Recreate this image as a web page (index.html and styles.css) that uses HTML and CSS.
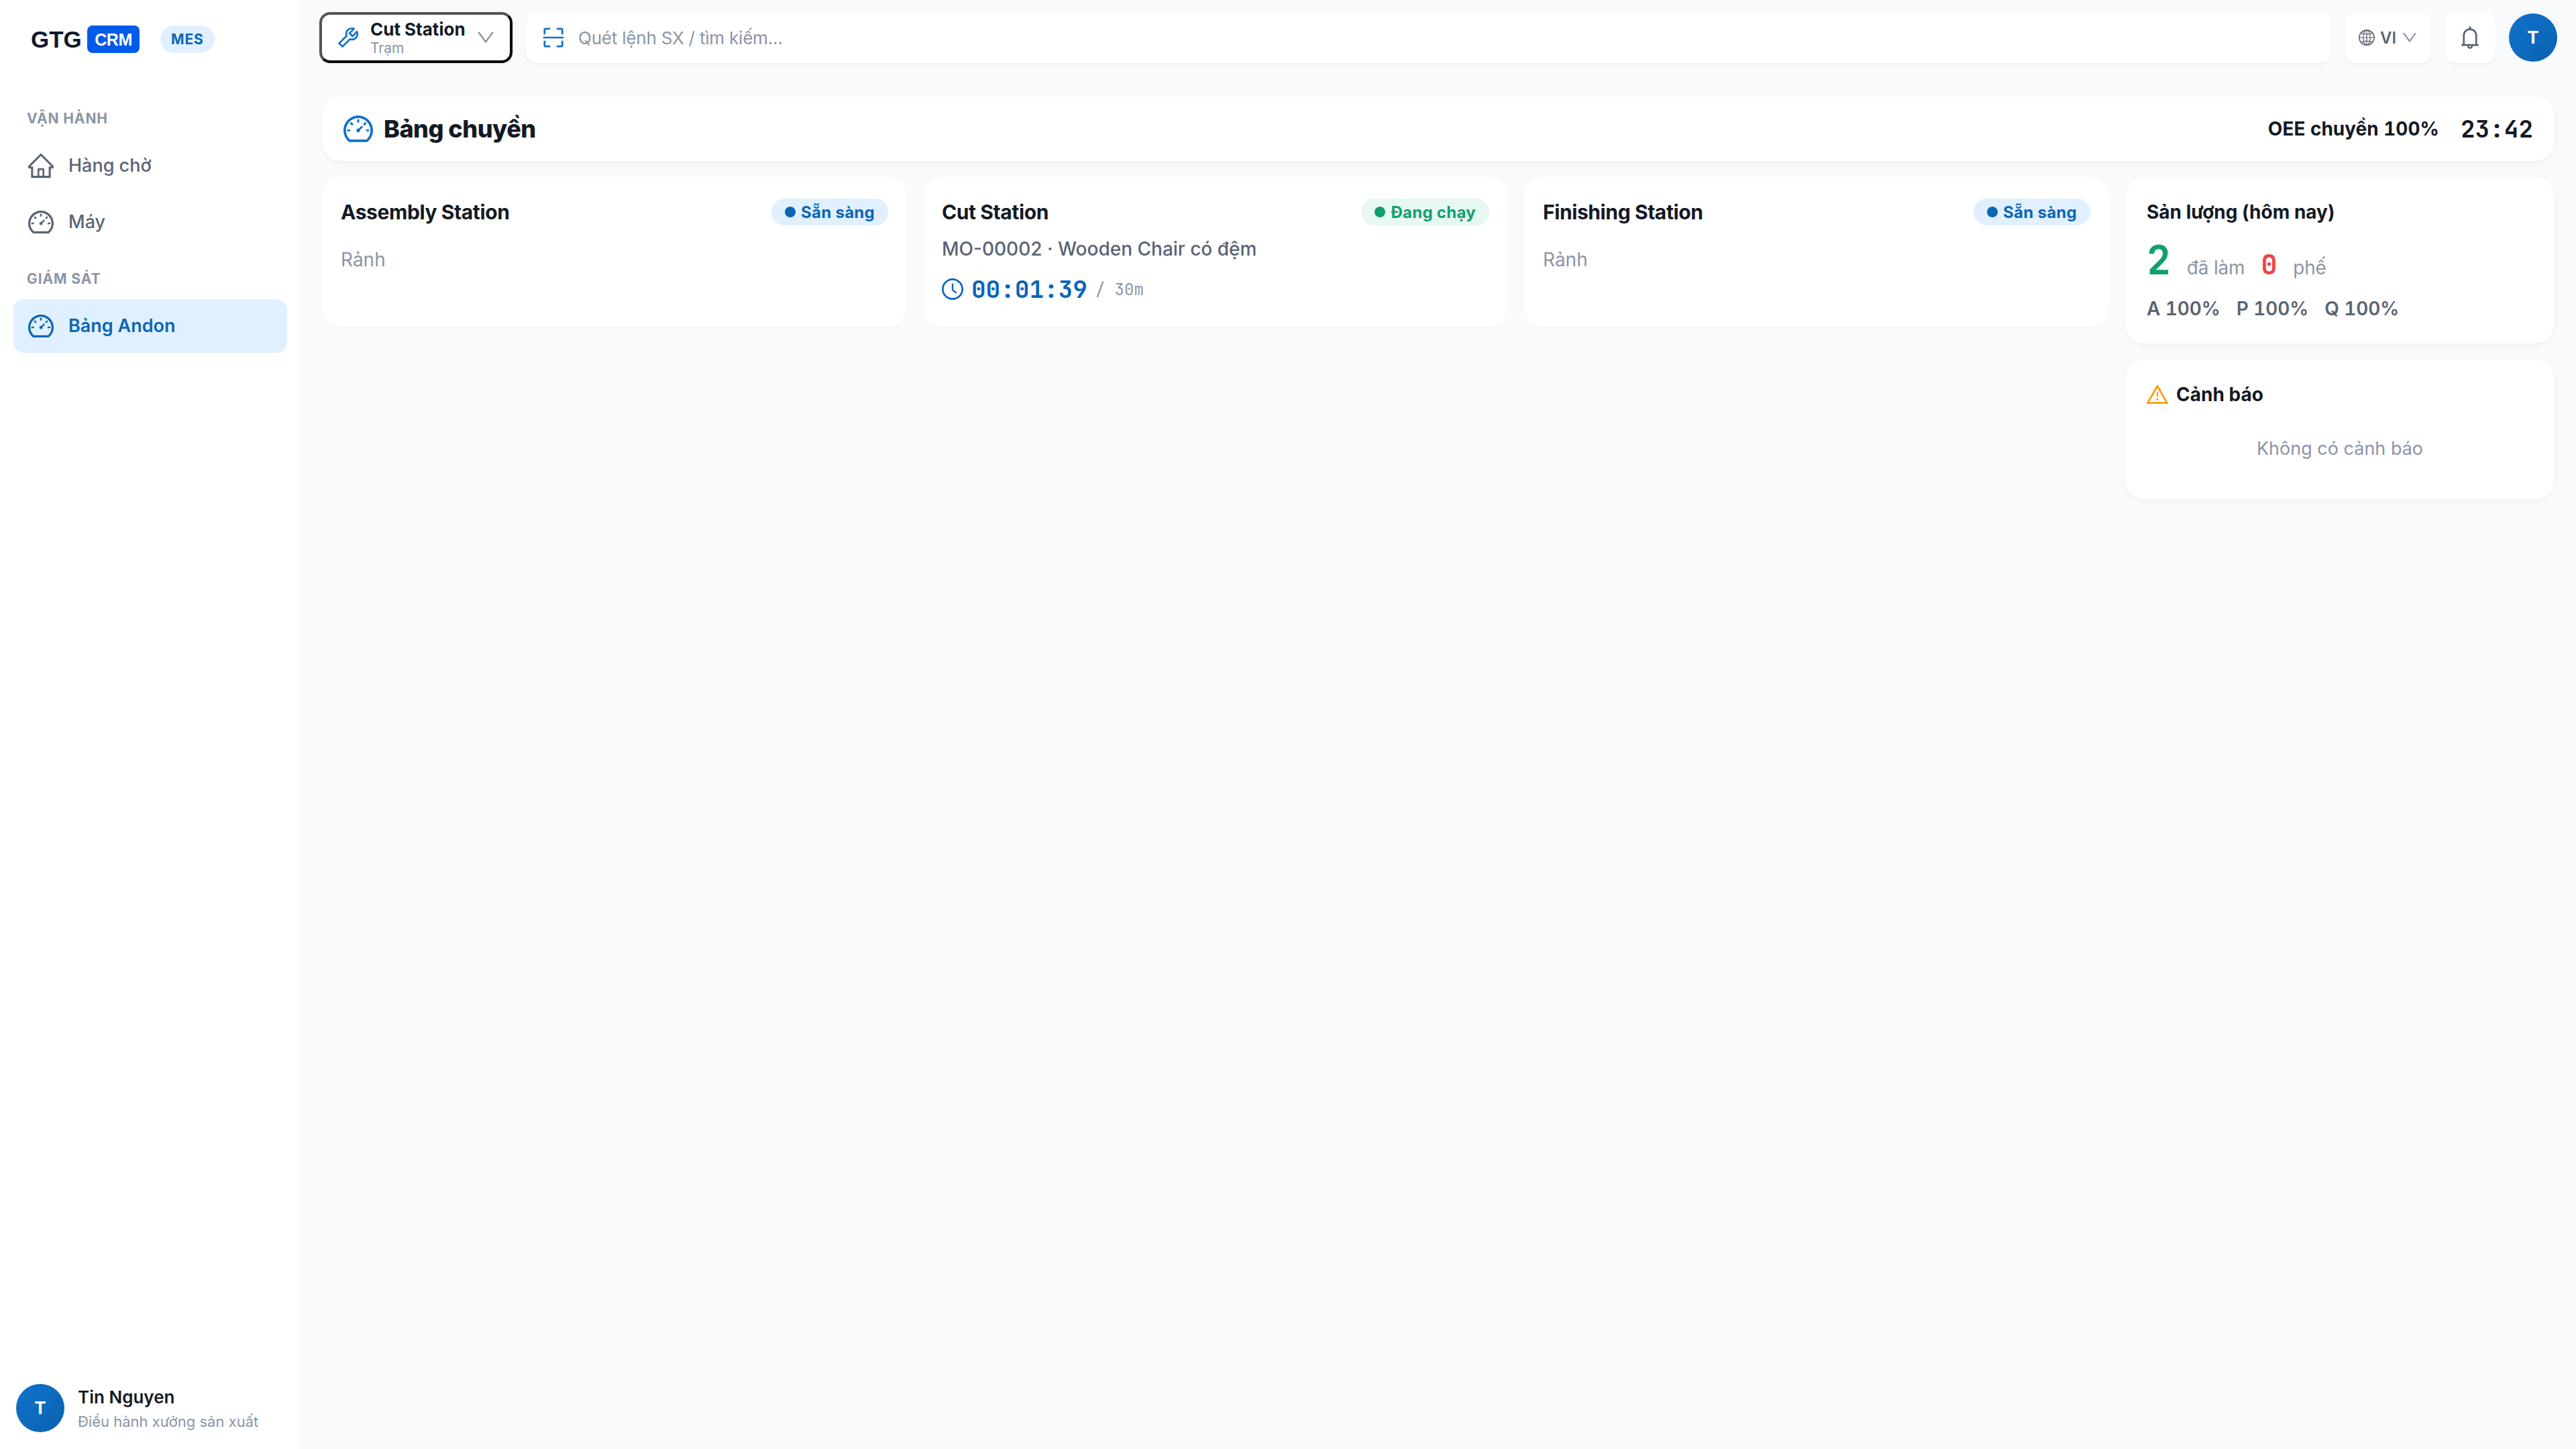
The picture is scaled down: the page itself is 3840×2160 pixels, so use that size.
FILE: index.html
```html
<!DOCTYPE html>
<html lang="vi">
<head>
  <meta charset="UTF-8">
  <meta name="viewport" content="width=device-width, initial-scale=1.0">
  <title>GTG CRM - MES</title>
  <link rel="stylesheet" href="styles.css">
</head>
<body>
  <svg class="sprite" aria-hidden="true">
    <symbol id="i-home" viewBox="64 64 896 896"><path d="M946.5 505L560.1 118.8l-25.9-25.9a31.5 31.5 0 00-44.4 0L77.5 505a63.9 63.9 0 00-18.8 46c.4 35.2 29.7 63.3 64.9 63.3h42.5V940h691.8V614.3h43.4c17.1 0 33.2-6.7 45.3-18.8a63.6 63.6 0 0018.7-45.3c0-17-6.7-33.1-18.8-45.2zM568 868H456V664h112v204zm217.9-325.7V868H632V640c0-22.1-17.9-40-40-40H432c-22.1 0-40 17.9-40 40v228H238.1V542.3h-96l370-369.7 23.1 23.1L882 542.3h-96.1z"/></symbol>
    <symbol id="i-dashboard" viewBox="64 64 896 896"><path d="M924.8 385.6a446.7 446.7 0 00-96-142.4 446.7 446.7 0 00-142.4-96C631.1 123.8 572.5 112 512 112s-119.1 11.8-174.4 35.2a446.7 446.7 0 00-142.4 96 446.7 446.7 0 00-96 142.4C75.8 440.9 64 499.5 64 560c0 132.7 58.3 257.7 159.9 343.1l1.7 1.4c5.8 4.8 13.1 7.5 20.6 7.5h531.7c7.5 0 14.8-2.7 20.6-7.5l1.7-1.4C901.7 817.7 960 692.7 960 560c0-60.5-11.9-119.1-35.2-174.4zM761.4 836H262.6A371.12 371.12 0 01140 560c0-99.4 38.7-192.8 109-263 70.3-70.3 163.7-109 263-109 99.4 0 192.8 38.7 263 109 70.3 70.3 109 163.7 109 263 0 105.6-44.5 205.5-122.6 276zM623.5 421.5a8.03 8.03 0 00-11.3 0L527.7 506c-18.7-5-39.4-.2-54.1 14.5a55.95 55.95 0 000 79.2 55.95 55.95 0 0079.2 0 55.87 55.87 0 0014.5-54.1l84.5-84.5c3.1-3.1 3.1-8.2 0-11.3l-28.3-28.3zM490 320h44c4.4 0 8-3.6 8-8v-80c0-4.4-3.6-8-8-8h-44c-4.4 0-8 3.6-8 8v80c0 4.4 3.6 8 8 8zm260 218v44c0 4.4 3.6 8 8 8h80c4.4 0 8-3.6 8-8v-44c0-4.4-3.6-8-8-8h-80c-4.4 0-8 3.6-8 8zm12.7-197.2l-31.1-31.1a8.03 8.03 0 00-11.3 0l-56.6 56.6a8.03 8.03 0 000 11.3l31.1 31.1c3.1 3.1 8.2 3.1 11.3 0l56.6-56.6c3.1-3.1 3.1-8.2 0-11.3zm-458.6-31.1a8.03 8.03 0 00-11.3 0l-31.1 31.1a8.03 8.03 0 000 11.3l56.6 56.6c3.1 3.1 8.2 3.1 11.3 0l31.1-31.1c3.1-3.1 3.1-8.2 0-11.3l-56.6-56.6zM262 530h-80c-4.4 0-8 3.6-8 8v44c0 4.4 3.6 8 8 8h80c4.4 0 8-3.6 8-8v-44c0-4.4-3.6-8-8-8z"/></symbol>
    <symbol id="i-tool" viewBox="64 64 896 896"><path d="M876.6 239.5c-.5-.9-1.2-1.8-2-2.5-5-5-13.1-5-18.1 0L684.2 409.3l-67.9-67.9L788.7 169c.8-.8 1.4-1.6 2-2.5 3.6-6.1 1.6-13.9-4.5-17.5-98.2-58-226.8-44.7-311.3 39.7-67 67-89.2 162-66.5 247.4l-293 293c-3 3-2.8 7.9.3 11l169.7 169.7c3.1 3.1 8.1 3.3 11 .3l292.9-292.9c85.5 22.8 180.5.7 247.6-66.4 84.4-84.5 97.7-213.1 39.7-311.3zM786 499.8c-58.1 58.1-145.3 69.3-214.6 33.6l-8.8 8.8-.1-.1-274 274.1-79.2-79.2 230.1-230.1s0 .1.1.1l52.8-52.8c-35.7-69.3-24.5-156.5 33.6-214.6a184.2 184.2 0 01144-53.5L537 318.9a32.05 32.05 0 000 45.3l124.5 124.5a32.05 32.05 0 0045.3 0l132.8-132.8c3.7 51.8-14.4 104.8-53.6 143.9z"/></symbol>
    <symbol id="i-down" viewBox="64 64 896 896"><path d="M884 256h-75c-5.1 0-9.9 2.5-12.9 6.6L512 654.2 227.9 262.6c-3-4.1-7.8-6.6-12.9-6.6h-75c-6.5 0-10.3 7.4-6.5 12.7l352.6 486.1c12.8 17.6 39 17.6 51.7 0l352.6-486.1c3.9-5.3.1-12.7-6.4-12.7z"/></symbol>
    <symbol id="i-scan" viewBox="64 64 896 896"><path d="M136 384h56c4.4 0 8-3.6 8-8V200h176c4.4 0 8-3.6 8-8v-56c0-4.4-3.6-8-8-8H196c-37.6 0-68 30.4-68 68v180c0 4.4 3.6 8 8 8zm512-184h176v176c0 4.4 3.6 8 8 8h56c4.4 0 8-3.6 8-8V196c0-37.6-30.4-68-68-68H648c-4.4 0-8 3.6-8 8v56c0 4.4 3.6 8 8 8zM376 824H200V648c0-4.4-3.6-8-8-8h-56c-4.4 0-8 3.6-8 8v180c0 37.6 30.4 68 68 68h180c4.4 0 8-3.6 8-8v-56c0-4.4-3.6-8-8-8zm512-184h-56c-4.4 0-8 3.6-8 8v176H648c-4.4 0-8 3.6-8 8v56c0 4.4 3.6 8 8 8h180c37.6 0 68-30.4 68-68V648c0-4.4-3.6-8-8-8zm16-164H120c-4.4 0-8 3.6-8 8v56c0 4.4 3.6 8 8 8h784c4.4 0 8-3.6 8-8v-56c0-4.4-3.6-8-8-8z"/></symbol>
    <symbol id="i-globe" viewBox="64 64 896 896"><g fill="none" stroke="currentColor" stroke-width="46"><circle cx="512" cy="512" r="416" stroke-width="60"/><ellipse cx="512" cy="512" rx="200" ry="416"/><path d="M512 98v828M98 512h828M200 238c80 66 190 80 312 80s232-14 312-80M200 786c80-66 190-80 312-80s232 14 312 80"/></g></symbol>
    <symbol id="i-bell" viewBox="64 64 896 896"><path d="M816 768h-24V428c0-141.1-104.3-257.7-240-277.1V112c0-22.1-17.9-40-40-40s-40 17.9-40 40v38.9c-135.7 19.4-240 136-240 277.1v340h-24c-17.7 0-32 14.3-32 32v32c0 4.4 3.6 8 8 8h216c0 61.8 50.2 112 112 112s112-50.2 112-112h216c4.4 0 8-3.6 8-8v-32c0-17.7-14.3-32-32-32zM512 888c-26.5 0-48-21.5-48-48h96c0 26.5-21.5 48-48 48zM304 768V428c0-55.6 21.6-107.8 60.9-147.1S456.4 220 512 220c55.6 0 107.8 21.6 147.1 60.9S720 372.4 720 428v340H304z"/></symbol>
    <symbol id="i-clock" viewBox="64 64 896 896"><path d="M512 64C264.6 64 64 264.6 64 512s200.6 448 448 448 448-200.6 448-448S759.4 64 512 64zm0 820c-205.4 0-372-166.6-372-372s166.6-372 372-372 372 166.6 372 372-166.6 372-372 372z"/><path d="M686.7 638.6L544.1 535.5V288c0-4.4-3.6-8-8-8H488c-4.4 0-8 3.6-8 8v275.4c0 2.6 1.2 5 3.3 6.5l165.4 120.6c3.6 2.6 8.6 1.8 11.2-1.7l28.6-39c2.6-3.7 1.8-8.7-1.8-11.2z"/></symbol>
    <symbol id="i-warning" viewBox="64 64 896 896"><path d="M464 720a48 48 0 1096 0 48 48 0 10-96 0zm16-304v184c0 4.4 3.6 8 8 8h48c4.4 0 8-3.6 8-8V416c0-4.4-3.6-8-8-8h-48c-4.4 0-8 3.6-8 8zm475.7 440l-416-720c-6.2-10.7-16.9-16-27.7-16s-21.6 5.3-27.7 16l-416 720C56 877.4 71.4 904 96 904h832c24.6 0 40-26.6 27.7-48zm-783.5-27.9L512 239.9l339.8 588.2H172.2z"/></symbol>
  </svg>

  <div class="app">
    <aside class="sidebar">
      <div class="brand">
        <span class="logo-text">GTG</span>
        <span class="logo-box">CRM</span>
        <span class="brand-tag">MES</span>
      </div>

      <nav class="menu">
        <div class="menu-label">VẬN HÀNH</div>
        <a class="menu-item"><svg class="icon"><use href="#i-home"/></svg><span>Hàng chờ</span></a>
        <a class="menu-item"><svg class="icon"><use href="#i-dashboard"/></svg><span>Máy</span></a>
        <div class="menu-label">GIÁM SÁT</div>
        <a class="menu-item active"><svg class="icon"><use href="#i-dashboard"/></svg><span>Bảng Andon</span></a>
      </nav>

      <div class="user">
        <div class="avatar">T</div>
        <div class="user-info">
          <div class="user-name">Tin Nguyen</div>
          <div class="user-role">Điều hành xưởng sản xuất</div>
        </div>
      </div>
    </aside>

    <div class="page">
      <header class="topbar">
        <button class="station-select">
          <svg class="icon"><use href="#i-tool"/></svg>
          <span class="station-text">
            <span class="station-current">Cut Station</span>
            <span class="station-sub">Trạm</span>
          </span>
          <svg class="icon chevron"><use href="#i-down"/></svg>
        </button>
        <div class="search">
          <svg class="icon"><use href="#i-scan"/></svg>
          <span>Quét lệnh SX / tìm kiếm...</span>
        </div>
        <div class="lang">
          <svg class="icon"><use href="#i-globe"/></svg>
          <span>VI</span>
          <svg class="icon chevron"><use href="#i-down"/></svg>
        </div>
        <div class="bell"><svg class="icon"><use href="#i-bell"/></svg></div>
        <div class="avatar">T</div>
      </header>

      <main class="content">
        <div class="board-head">
          <svg class="icon"><use href="#i-dashboard"/></svg>
          <h1>Bảng chuyền</h1>
          <span class="oee">OEE chuyền 100%</span>
          <span class="clock">23:42</span>
        </div>

        <div class="board">
          <section class="stations">
            <div class="station">
              <div class="station-head">
                <h2>Assembly Station</h2>
                <span class="status ready">Sẵn sàng</span>
              </div>
              <div class="idle">Rảnh</div>
            </div>
            <div class="station">
              <div class="station-head">
                <h2>Cut Station</h2>
                <span class="status running">Đang chạy</span>
              </div>
              <div class="order">MO-00002 · Wooden Chair có đệm</div>
              <div class="timer">
                <svg class="icon"><use href="#i-clock"/></svg>
                <span class="elapsed">00:01:39</span>
                <span class="planned">/ 30m</span>
              </div>
            </div>
            <div class="station">
              <div class="station-head">
                <h2>Finishing Station</h2>
                <span class="status ready">Sẵn sàng</span>
              </div>
              <div class="idle">Rảnh</div>
            </div>
          </section>

          <section class="side">
            <div class="card output">
              <h3>Sản lượng (hôm nay)</h3>
              <div class="counts">
                <span class="done">2</span>
                <span>đã làm</span>
                <span class="scrap">0</span>
                <span>phế</span>
              </div>
              <div class="rates">
                <span>A 100%</span>
                <span>P 100%</span>
                <span>Q 100%</span>
              </div>
            </div>
            <div class="card alerts">
              <h3><svg class="icon"><use href="#i-warning"/></svg>Cảnh báo</h3>
              <div class="empty">Không có cảnh báo</div>
            </div>
          </section>
        </div>
      </main>
    </div>
  </div>
</body>
</html>
```
FILE: styles.css
```css
* {
  box-sizing: border-box;
}
body {
  margin: 0;
  font-family: Inter, sans-serif;
  font-size: 28px;
  color: #141a24;
  background: #f8fafc;
}
h1, h2, h3 {
  margin: 0;
}
.sprite {
  display: none;
}
.icon {
  fill: currentColor;
  flex-shrink: 0;
  display: block;
}
.app {
  display: flex;
  height: 2160px;
}

/* sidebar */
.sidebar {
  width: 448px;
  background: #fff;
  display: flex;
  flex-direction: column;
}
.brand {
  display: flex;
  align-items: center;
  height: 116px;
  padding-left: 46px;
}
.logo-text {
  font: bold 35px/41px "Liberation Sans", Arial, sans-serif;
  color: #0f172a;
  width: 84px;
}
.logo-box {
  width: 78px;
  height: 41px;
  border-radius: 8px;
  background: #005be8;
  color: #fff;
  font: bold 25px/42px "Liberation Sans", Arial, sans-serif;
  letter-spacing: -0.5px;
  text-align: center;
}
.brand-tag {
  margin-left: 31px;
  height: 41px;
  padding: 0 16px;
  border-radius: 21px;
  background: #e0f0fe;
  color: #0b65b5;
  font-size: 21px;
  font-weight: 700;
  line-height: 41px;
  letter-spacing: 0.9px;
}
.menu {
  flex: 1;
  padding: 0 20px;
}
.menu-label {
  padding: 45px 20px 0;
  height: 91px;
  font-size: 21px;
  font-weight: 700;
  line-height: 32px;
  letter-spacing: 0.9px;
  color: #8b95a5;
}
.menu-item + .menu-label {
  height: 71px;
  padding-top: 25px;
}
.menu-item {
  display: flex;
  align-items: center;
  gap: 22px;
  height: 80px;
  margin-bottom: 4px;
  padding: 0 22px;
  border-radius: 16px;
  font-size: 27px;
  font-weight: 500;
  color: #5a6474;
}
.menu-item span {
  padding-bottom: 2px;
}
.menu-item .icon {
  width: 38px;
  height: 38px;
}
.menu-item.active {
  background: #e0f0fe;
  color: #0b65b5;
  font-weight: 600;
}
.user {
  display: flex;
  align-items: center;
  gap: 20px;
  padding: 0 24px 24px;
}
.user-info {
  padding-top: 2px;
}
.avatar {
  width: 72px;
  height: 72px;
  border-radius: 50%;
  background: linear-gradient(135deg, #0f72cc, #0b62b0);
  color: #fff;
  font-size: 26px;
  font-weight: 700;
  line-height: 72px;
  text-align: center;
}
.user-name {
  font-size: 26px;
  font-weight: 600;
  line-height: 38px;
}
.user-role {
  font-size: 22px;
  line-height: 34px;
  color: #8b95a5;
}

/* top bar */
.page {
  flex: 1;
}
.topbar {
  display: flex;
  align-items: center;
  gap: 20px;
  height: 112px;
  padding: 0 28px;
}
.station-select,
.search,
.lang,
.bell {
  display: flex;
  align-items: center;
  height: 76px;
  border-radius: 16px;
  background: #fff;
  box-shadow: 0 2px 4px rgba(16, 24, 40, 0.05);
}
.station-select {
  width: 288px;
  gap: 16px;
  padding: 0 22px;
  border: 4px outset #000;
  border-radius: 16px;
  font-family: inherit;
  color: #141a24;
  text-align: left;
}
.station-select .icon {
  width: 34px;
  height: 34px;
  color: #0f72cc;
}
.station-select .chevron {
  width: 28px;
  height: 28px;
  color: #8b95a5;
}
.station-text {
  display: flex;
  flex-direction: column;
  padding-top: 1px;
}
.station-current {
  font-size: 26px;
  font-weight: 700;
  line-height: 30px;
  white-space: nowrap;
}
.station-sub {
  font-size: 21px;
  line-height: 26px;
  color: #8b95a5;
}
.search {
  flex: 1;
  gap: 20px;
  padding: 0 24px;
  font-size: 26px;
  letter-spacing: -0.2px;
  color: #8b95a5;
}
.search .icon {
  width: 34px;
  height: 34px;
  color: #0f72cc;
}
.lang {
  width: 128px;
  gap: 8px;
  padding: 0 20px;
  font-size: 24px;
  font-weight: 600;
  color: #5a6474;
}
.lang .icon {
  width: 24px;
  height: 24px;
}
.lang .chevron {
  margin-left: auto;
  color: #8b95a5;
}
.bell {
  width: 76px;
  justify-content: center;
  color: #5a6474;
}
.bell .icon {
  width: 34px;
  height: 34px;
}

/* board */
.content {
  padding: 32px;
}
.board-head,
.station,
.card {
  background: #fff;
  border-radius: 28px;
  box-shadow: 0 2px 6px rgba(16, 24, 40, 0.05);
}
.station {
  box-shadow: 0 1px 2px rgba(16, 24, 40, 0.03);
}
.board-head {
  display: flex;
  align-items: center;
  height: 96px;
  padding: 0 32px;
}
.board-head .icon {
  width: 44px;
  height: 44px;
  margin-right: 16px;
  color: #0f72cc;
}
.board-head h1 {
  font-size: 36px;
  font-weight: 800;
  letter-spacing: -0.5px;
}
.oee {
  margin-left: auto;
  font-weight: 700;
  font-variant-numeric: tabular-nums;
}
.clock,
.elapsed,
.planned,
.done,
.scrap {
  font-family: "JetBrains Mono", "DejaVu Sans Mono", monospace;
}
.clock {
  margin-left: 32px;
  font-size: 36px;
  font-weight: 700;
}
.board {
  display: flex;
  align-items: flex-start;
  gap: 24px;
  margin-top: 24px;
}
.stations {
  flex: 1;
  display: grid;
  grid-template-columns: repeat(3, 1fr);
  gap: 24px;
}
.station {
  height: 223px;
  padding: 32px 28px;
}
.station-head {
  display: flex;
  align-items: center;
  justify-content: space-between;
  height: 40px;
}
.station-head h2 {
  font-size: 30px;
  font-weight: 700;
  letter-spacing: -0.4px;
}
.status {
  display: flex;
  align-items: center;
  gap: 8px;
  height: 40px;
  padding: 0 20px;
  border-radius: 20px;
  font-size: 24px;
  font-weight: 700;
  letter-spacing: 0.27px;
}
.status::before {
  content: "";
  width: 16px;
  height: 16px;
  border-radius: 50%;
  background: currentColor;
}
.ready {
  background: #e0f0fe;
  color: #0b65b5;
}
.running {
  background: #e7f8f1;
  color: #10a06c;
}
.idle {
  margin-top: 30px;
  line-height: 42px;
  color: #8b95a5;
}
.order {
  margin-top: 14px;
  line-height: 42px;
  font-weight: 500;
  color: #5a6474;
}
.timer {
  display: flex;
  align-items: center;
  height: 48px;
  margin-top: 15px;
  color: #0b65b5;
}
.timer .icon {
  width: 32px;
  height: 32px;
}
.elapsed {
  margin-left: 12px;
  font-size: 36px;
  font-weight: 700;
}
.planned {
  margin-left: 12px;
  font-size: 24px;
  color: #8b95a5;
}

/* right column */
.side {
  width: 640px;
  display: flex;
  flex-direction: column;
  gap: 24px;
}
.card {
  padding: 32px;
}
.card h3 {
  display: flex;
  align-items: center;
  gap: 12px;
  height: 40px;
  font-size: 28px;
  font-weight: 700;
}
.output {
  height: 248px;
}
.counts {
  display: flex;
  align-items: baseline;
  gap: 24px;
  height: 80px;
  margin-top: 12px;
  line-height: 80px;
  letter-spacing: -0.2px;
  color: #8b95a5;
}
.done {
  font-size: 60px;
  font-weight: 700;
  color: #10a06c;
}
.scrap {
  font-size: 40px;
  font-weight: 700;
  color: #f04444;
}
.rates {
  display: flex;
  gap: 24px;
  margin-top: 11px;
  line-height: 42px;
  font-weight: 600;
  letter-spacing: -0.1px;
  font-variant-numeric: tabular-nums;
  color: #5a6474;
}
.alerts {
  height: 208px;
}
.alerts .icon {
  width: 32px;
  height: 32px;
  color: #f99d0b;
}
.empty {
  margin-top: 40px;
  line-height: 42px;
  text-align: center;
  font-size: 27px;
  color: #8b95a5;
}
```
